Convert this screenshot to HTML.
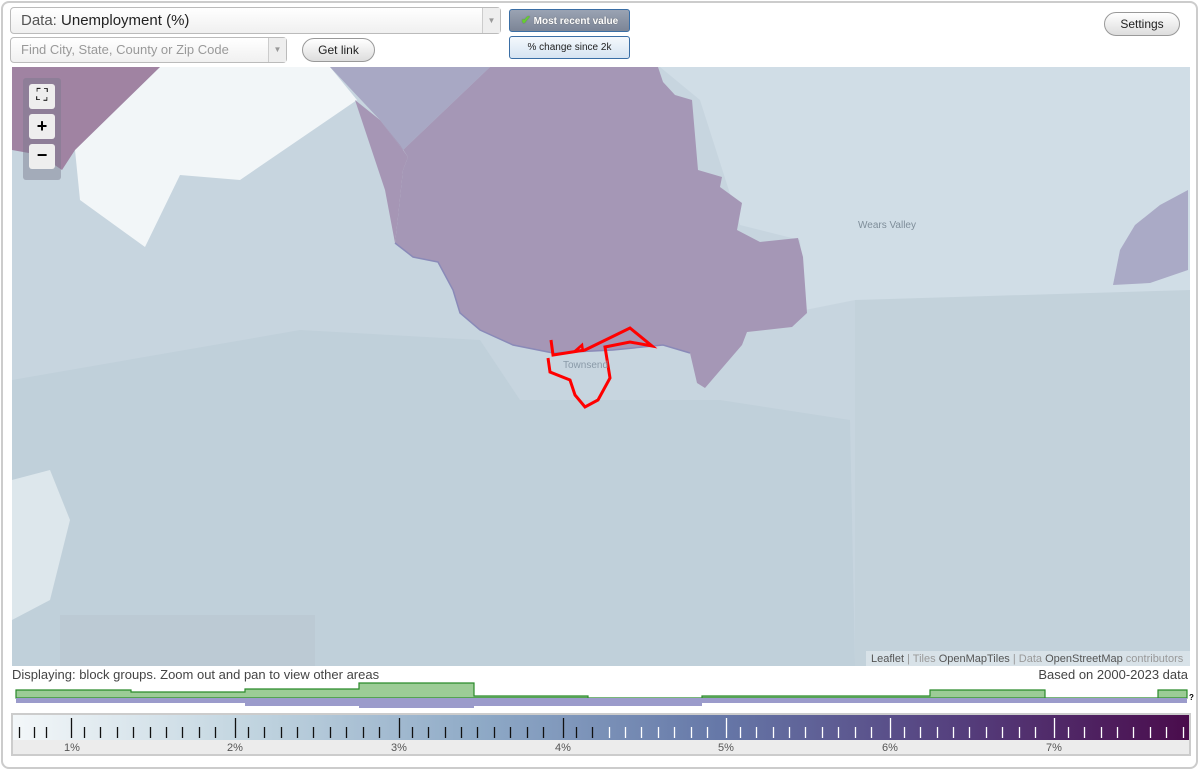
<!DOCTYPE html>
<html><head><meta charset="utf-8"><style>
*{box-sizing:border-box}
body{margin:0;width:1200px;height:771px;background:#fff;font-family:"Liberation Sans",Arial,sans-serif;position:relative;overflow:hidden}
.frame{position:absolute;left:1px;top:1px;width:1197px;height:768px;border:2px solid #ccc;border-radius:8px}
.sel{position:absolute;background:linear-gradient(#fff,#f0f0f0);border:1px solid #bbb;border-radius:4px;font-size:14px;color:#555}
.arrow{position:absolute;right:0;top:0;bottom:0;width:18px;border-left:1px solid #ccc;background:#eee;color:#999;font-size:8px;text-align:center}
.btn{position:absolute;border:1px solid #999;border-radius:12px;background:linear-gradient(#fff,#ddd);font-size:12px;color:#222;text-align:center}
.tb{position:absolute;border:1px solid #3a6ea5;border-radius:3px;font-size:10px;text-align:center}
</style></head><body>
<div class="frame"></div>
<div class="sel" style="left:10px;top:7px;width:491px;height:27px;line-height:25px;padding-left:10px;font-size:15px">Data: <span style="color:#222">Unemployment (%)</span><div class="arrow" style="line-height:25px">▼</div></div>
<div class="sel" style="left:10px;top:37px;width:277px;height:26px;line-height:24px;padding-left:10px;font-size:13px;color:#999">Find City, State, County or Zip Code<div class="arrow" style="line-height:24px">▼</div></div>
<div class="btn" style="left:302px;top:38px;width:73px;height:24px;line-height:22px">Get link</div>
<div class="tb" style="left:509px;top:9px;width:121px;height:23px;line-height:21px;background:linear-gradient(#9aa3b3,#7c8596);color:#fff;font-weight:bold;text-shadow:0 0 1px #555">
<span style="color:#6c3;font-size:12px">✔</span> Most recent value</div>
<div class="tb" style="left:509px;top:36px;width:121px;height:23px;line-height:21px;background:linear-gradient(#f4f8fc,#d6e4f2);color:#222">% change since 2k</div>
<div class="btn" style="left:1104px;top:12px;width:76px;height:24px;line-height:22px">Settings</div>

<svg style="position:absolute;left:12px;top:67px" width="1178" height="599" viewBox="12 67 1178 599">
<rect x="12" y="67" width="1178" height="599" fill="#c7d5df"/>
<polygon points="660,67 1190,67 1190,660 855,660 855,300 805,310 800,240 740,225 700,100" fill="#d0dde6"/>
<polygon points="855,300 1190,290 1190,666 855,666" fill="#c3d2db"/>
<polygon points="12,380 300,330 480,340 520,400 720,400 850,420 855,666 12,666" fill="#c0d0da"/>
<polygon points="12,480 50,470 70,520 50,600 12,620" fill="#dde7ec"/>
<polygon points="60,615 315,615 315,666 60,666" fill="#bccad4"/>
<polygon points="160,67 330,67 357,100 240,180 180,175 145,247 80,200 75,150" fill="#f2f6f8"/>
<polygon points="12,67 160,67 75,150 62,170 40,155 12,150" fill="#a083a2"/>
<polygon points="330,67 490,67 403,150 380,120" fill="#a8a8c4"/>
<polygon points="490,67 658,67 663,82 675,95 692,100 698,170 722,177 720,187 742,203 737,230 760,242 798,238 803,257 807,313 792,327 747,332 742,345 705,388 697,383 690,353 663,345 613,350 553,353 513,345 480,330 460,313 453,290 438,262 413,257 395,243 398,217 403,170 408,157 400,145 380,120 403,150" fill="#a597b6"/>
<polygon points="355,100 380,120 403,150 408,157 403,170 398,217 395,243 385,190" fill="#a696b5"/>
<polygon points="1188,190 1160,205 1135,225 1120,250 1113,285 1150,283 1188,270" fill="#aaaac6"/>
<polyline points="395,243 413,257 438,262 453,290 460,313 480,330 513,345 553,353 613,350 663,345 690,353" fill="none" stroke="#8a8ab8" stroke-width="1.5"/>
<polyline points="551,340 553,355 585,350 630,328 652,346 630,342 605,347 610,378 598,400 585,407 575,395 570,380 550,372 548,358" fill="none" stroke="#f00" stroke-width="3"/>
<polyline points="574,352 582,345 583,352" fill="none" stroke="#f00" stroke-width="2.5"/>
<text x="563" y="368" font-size="10" fill="#8a9aa8" font-family="Liberation Sans">Townsend</text>
<text x="858" y="228" font-size="10" fill="#7f8e9a" font-family="Liberation Sans">Wears Valley</text>
<rect x="866" y="651" width="324" height="15" fill="#d8e2e8"/>
<text x="871" y="662" font-size="11" fill="#999" font-family="Liberation Sans"><tspan fill="#555">Leaflet</tspan> | Tiles <tspan fill="#555">OpenMapTiles</tspan> | Data <tspan fill="#555">OpenStreetMap</tspan> contributors</text>
</svg>
<div style="position:absolute;left:23px;top:78px;width:38px;height:102px;background:rgba(120,120,140,.45);border-radius:3px"></div>
<div style="position:absolute;left:29px;top:84px;width:26px;height:25px;background:#eee;border-radius:3px;font-size:16px;text-align:center;line-height:24px">⛶</div>
<div style="position:absolute;left:29px;top:114px;width:26px;height:25px;background:#eee;border-radius:3px;font-size:18px;font-weight:bold;text-align:center;line-height:24px">+</div>
<div style="position:absolute;left:29px;top:144px;width:26px;height:25px;background:#eee;border-radius:3px;font-size:18px;font-weight:bold;text-align:center;line-height:22px">−</div>

<div style="position:absolute;left:12px;top:667px;font-size:13px;color:#444">Displaying: block groups. Zoom out and pan to view other areas</div>
<div style="position:absolute;right:12px;top:667px;font-size:13px;color:#444">Based on 2000-2023 data</div>

<svg style="position:absolute;left:0;top:680px" width="1200" height="34">
<path d="M16,18 V10 H131 V12 H245 V9 H359 V3 H474 V16 H588 V18 H702 V16 H816 V16 H930 V10 H1045 V18 H1158 V10 H1187 V18 Z" fill="#9ccc96" stroke="#2a8a2a" stroke-width="1.2"/>
<path d="M16,18 H1187 V23 H702 V26 H474 V28 H359 V26 H245 V23 H16 Z" fill="#9b9bcb"/>
<text x="1189" y="20" font-size="8" font-weight="bold" fill="#000">?</text>
</svg>

<div style="position:absolute;left:11px;top:713px;width:1180px;height:43px;border:2px solid #ccc;background:#ececec"></div>
<svg style="position:absolute;left:13px;top:715px" width="1176" height="39">
<defs><linearGradient id="g" x1="0" x2="1"><stop offset="0" stop-color="#f3f7f9"/><stop offset=".2" stop-color="#c2d5e0"/><stop offset=".4" stop-color="#8ea9c6"/><stop offset=".6" stop-color="#6678a8"/><stop offset=".8" stop-color="#55407e"/><stop offset="1" stop-color="#4a0c4c"/></linearGradient></defs>
<rect x="0" y="0" width="1176" height="25" fill="url(#g)"/>
<g id="t"></g>
<g font-size="11" fill="#555" font-family="Liberation Sans" text-anchor="middle">
<text x="59" y="36">1%</text><text x="222" y="36">2%</text><text x="386" y="36">3%</text><text x="550" y="36">4%</text><text x="713" y="36">5%</text><text x="877" y="36">6%</text><text x="1041" y="36">7%</text></g>
<path d="
M6.5,12v11M21.5,12v11M33.5,12v11M58.5,3v20M71.5,12v11M87.5,12v11M104.5,12v11M120.5,12v11M137.5,12v11M153.5,12v11M169.5,12v11M186.5,12v11M202.5,12v11M222.5,3v20M235.5,12v11M251.5,12v11M268.5,12v11M284.5,12v11M300.5,12v11M317.5,12v11M333.5,12v11M350.5,12v11M366.5,12v11M386.5,3v20M399.5,12v11M415.5,12v11M432.5,12v11M448.5,12v11M464.5,12v11M481.5,12v11M497.5,12v11M514.5,12v11M530.5,12v11M550.5,3v20M563.5,12v11M579.5,12v11" stroke="#111" stroke-width="1.3"/>
<path d="M596.5,12v11M612.5,12v11M628.5,12v11M645.5,12v11M661.5,12v11M678.5,12v11M694.5,12v11M713.5,3v20M727.5,12v11M743.5,12v11M760.5,12v11M776.5,12v11M792.5,12v11M809.5,12v11M825.5,12v11M842.5,12v11M858.5,12v11M877.5,3v20M891.5,12v11M907.5,12v11M924.5,12v11M940.5,12v11M956.5,12v11M973.5,12v11M989.5,12v11M1006.5,12v11M1022.5,12v11M1041.5,3v20M1055.5,12v11M1071.5,12v11M1088.5,12v11M1104.5,12v11M1120.5,12v11M1137.5,12v11M1153.5,12v11M1170.5,12v11" stroke="#fff" stroke-width="1.3"/>
</svg>
</body></html>
